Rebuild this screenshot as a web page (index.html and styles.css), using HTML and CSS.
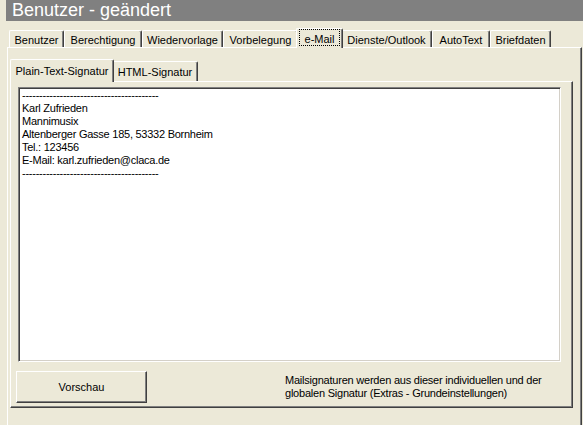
FILE: index.html
```html
<!DOCTYPE html>
<html lang="de">
<head>
<meta charset="utf-8">
<title>Benutzer - geändert</title>
<link rel="stylesheet" href="styles.css">
</head>
<body>
<div class="title">Benutzer - geändert</div>
<div class="tabrow outer-tabs">
  <div class="tab">Benutzer</div>
  <div class="tab">Berechtigung</div>
  <div class="tab">Wiedervorlage</div>
  <div class="tab">Vorbelegung</div>
  <div class="tab sel"><span class="focus">e-Mail</span></div>
  <div class="tab">Dienste/Outlook</div>
  <div class="tab">AutoText</div>
  <div class="tab">Briefdaten</div>
</div>
<div class="panel">
  <div class="tabrow inner-tabs">
    <div class="tab sel">Plain-Text-Signatur</div>
    <div class="tab">HTML-Signatur</div>
  </div>
  <div class="inner">
    <div class="sig">----------------------------------------<br>Karl Zufrieden<br>Mannimusix<br>Altenberger Gasse 185, 53332 Bornheim<br>Tel.: 123456<br>E-Mail: karl.zufrieden@claca.de<br>----------------------------------------</div>
    <div class="bottom">
      <div class="btn">Vorschau</div>
      <p class="info">Mailsignaturen werden aus dieser individuellen und der<br>globalen Signatur (Extras - Grundeinstellungen)</p>
    </div>
  </div>
</div>
</body>
</html>
```
FILE: styles.css
```css
html, body {
  margin: 0;
  padding: 0;
}
body {
  width: 583px;
  height: 425px;
  overflow: hidden;
  background: #ECE9D8;
  font-family: "Liberation Sans", Arial, sans-serif;
  font-size: 11px;
  color: #000;
}
.title {
  margin-left: 6px;
  height: 21px;
  background: #808080;
  color: #fff;
  font-size: 18px;
  line-height: 21px;
  padding-left: 6px;
}
.tabrow {
  display: flex;
  align-items: flex-end;
  padding-left: 2px;
}
.outer-tabs {
  height: 26px;
  padding-left: 9px;
}
.tab {
  box-sizing: border-box;
  height: 17px;
  border-top: 1px solid #fff;
  border-left: 1px solid #fff;
  border-right: 1px solid #404040;
  box-shadow: inset -1px 0 #808080;
  border-radius: 2px 2px 0 0;
  text-align: center;
  line-height: 18px;
  white-space: nowrap;
  background: #ECE9D8;
}
.tab.sel {
  position: relative;
  z-index: 1;
  height: 20px;
  margin: 0 -2px -1px;
  line-height: 21px;
}
.focus {
  display: block;
  box-sizing: border-box;
  height: 17px;
  margin: 0 2px;
  border: 1px dotted #000;
  line-height: 19px;
}
.outer-tabs .tab:nth-child(1) { width: 55px; }
.outer-tabs .tab:nth-child(2) { width: 78px; }
.outer-tabs .tab:nth-child(3) { width: 81px; }
.outer-tabs .tab:nth-child(4) { width: 75px; }
.outer-tabs .tab:nth-child(5) { width: 47px; }
.outer-tabs .tab:nth-child(6) { width: 91px; }
.outer-tabs .tab:nth-child(7) { width: 58px; }
.outer-tabs .tab:nth-child(8) { width: 61px; }

.panel {
  box-sizing: border-box;
  margin-left: 7px;
  width: 575px;
  height: 378px;
  border-top: 1px solid #fff;
  border-left: 1px solid #fff;
  border-right: 1px solid #404040;
  box-shadow: inset -1px 0 #808080;
  padding: 11px 8px 0 2px;
}
.inner-tabs {
  height: 22px;
}
.inner-tabs .tab {
  height: 20px;
  line-height: 21px;
}
.inner-tabs .tab.sel {
  height: 23px;
  line-height: 22px;
}
.inner-tabs .tab:nth-child(1) { width: 104px; }
.inner-tabs .tab:nth-child(2) { width: 86px; }

.inner {
  border-top: 1px solid #fff;
  border-left: 1px solid #fff;
  border-right: 1px solid #404040;
  border-bottom: 1px solid #404040;
  box-shadow: inset -1px -1px #808080;
  padding: 5px 11px 4px 7px;
}
.sig {
  box-sizing: border-box;
  height: 275px;
  background: #fff;
  border-top: 1px solid #808080;
  border-left: 1px solid #808080;
  border-bottom: 1px solid #fff;
  border-right: 1px solid #fff;
  box-shadow: inset 1px 1px #404040, inset -1px -1px #D4D0C8;
  padding: 1px 3px;
  line-height: 13px;
  letter-spacing: -0.25px;
}
.bottom {
  display: flex;
  align-items: flex-start;
  margin-top: 9px;
}
.btn {
  box-sizing: border-box;
  width: 131px;
  height: 32px;
  margin-left: -2px;
  border-top: 1px solid #fff;
  border-left: 1px solid #fff;
  border-right: 1px solid #404040;
  border-bottom: 1px solid #404040;
  box-shadow: inset -1px -1px #808080;
  text-align: center;
  line-height: 30px;
}
.info {
  margin: 3px 0 0 138px;
  line-height: 13px;
  letter-spacing: -0.22px;
}
```
